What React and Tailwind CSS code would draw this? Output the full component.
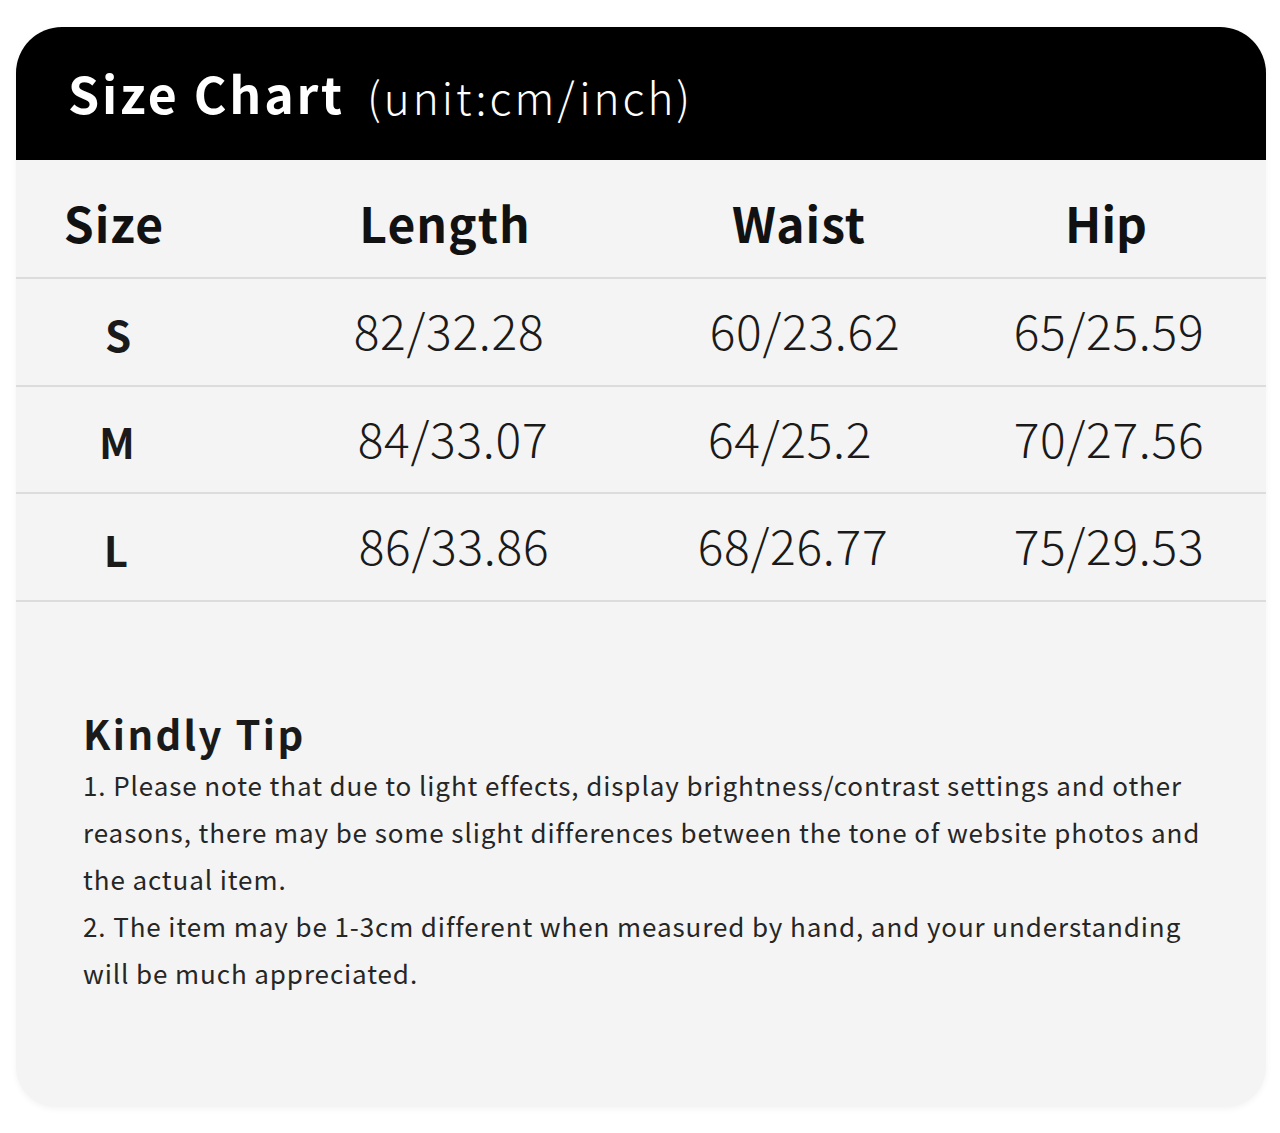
import React from "react";

const rows = [
  { size: "S", length: "82/32.28", waist: "60/23.62", hip: "65/25.59", h: "h-[108px]", sz: "pl-[8px]", len: "pl-[6px]", wst: "pl-[12px]" },
  { size: "M", length: "84/33.07", waist: "64/25.2", hip: "70/27.56", h: "h-[107px]", sz: "pl-[6px]", len: "pl-[14px]", wst: "pr-[18px]" },
  { size: "L", length: "86/33.86", waist: "68/26.77", hip: "75/29.53", h: "h-[108px]", sz: "pl-[4px]", len: "pl-[16px]", wst: "pr-[12px]" },
];

const font = { fontFamily: '"Noto Sans CJK SC", "Noto Sans", sans-serif' };

export default function App() {
  return (
    <div className="min-h-[1133px] bg-white pt-[27px] px-[16px]" style={font}>
      <section className="w-[1250px] h-[1080px] bg-[#f4f4f4] rounded-t-[46px] rounded-b-[40px] shadow-[0_2px_6px_rgba(0,0,0,0.05)] overflow-hidden flex flex-col">
        <header className="h-[133px] bg-black flex items-center pl-[52px] pb-[2px] gap-[22px] text-white">
          <h1 className="text-[50px] font-bold tracking-[2.8px]">Size Chart</h1>
          <span className="text-[44px] font-light tracking-[3px] pt-[6px]">(unit:cm/inch)</span>
        </header>

        <div className="grid grid-cols-[196px_468px_238px_1fr] h-[119px] pt-[6px] items-center border-b-2 border-[#dcdcdc] text-[48px] font-bold text-[#111]">
          <div className="text-center tracking-[1px]">Size</div>
          <div className="text-center pr-[2px] tracking-[1px]">Length</div>
          <div className="text-center tracking-[1px]">Waist</div>
          <div className="text-center pl-[28px]">Hip</div>
        </div>

        {rows.map((r) => (
          <div
            key={r.size}
            className={`grid grid-cols-[196px_468px_238px_1fr] ${r.h} pb-[6px] items-center border-b-2 border-[#dcdcdc] text-[48px] font-light text-[#1a1a1a]`}
          >
            <div className={`text-center font-bold text-[42px] pt-[8px] ${r.sz}`}>{r.size}</div>
            <div className={`text-center tracking-[0.7px] ${r.len}`}>{r.length}</div>
            <div className={`text-center tracking-[0.7px] ${r.wst}`}>{r.waist}</div>
            <div className="text-center tracking-[0.7px] pl-[34px]">{r.hip}</div>
          </div>
        ))}

        <div className="pl-[67px] pt-[107px] text-[#1a1a1a]">
          <h2 className="text-[40px] font-bold leading-[48px] tracking-[2.4px]">Kindly Tip</h2>
          <p className="text-[26px] leading-[47px] mt-[4px] text-[#262626] tracking-[0.9px]">
            1. Please note that due to light effects, display brightness/contrast settings and other
            <br />
            reasons, there may be some slight differences between the tone of website photos and
            <br />
            the actual item.
            <br />
            2. The item may be 1-3cm different when measured by hand, and your understanding
            <br />
            will be much appreciated.
          </p>
        </div>
      </section>
    </div>
  );
}
